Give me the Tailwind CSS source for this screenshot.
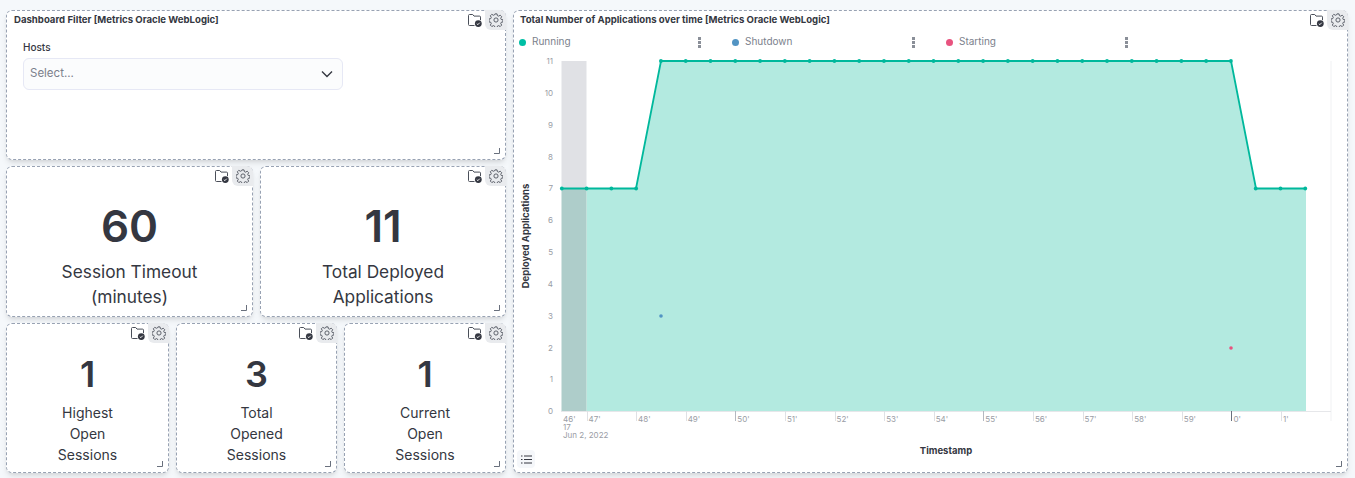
<!DOCTYPE HTML>
<html lang="en">
<head>
    <title>Metrics Oracle WebLogic</title>
    <meta http-equiv="Content-Type" content="text/html; charset=UTF-8" />
    <script src="https://cdn.jsdelivr.net/npm/@tailwindcss/browser@4"></script>
</head>
<body class="bg-[#f5f8fb] font-['Inter',sans-serif] text-[#343741] overflow-hidden">
<svg class="hidden">
    <symbol id="folder" viewBox="0 0 14 13">
        <path d="M6.500 11.500H1.500a1 1 0 0 1-1-1V1.500a1 1 0 0 1 1-1h3.200l1.300 1.600h5.500a1 1 0 0 1 1 1v3" fill="none" stroke="#4a4f59" stroke-width="1"/>
        <circle cx="10.300" cy="9.600" r="3.400" fill="#343741"/>
        <path d="M8.800 9.700l1.100 1 1.800-2" fill="none" stroke="#fff" stroke-width="0.9"/>
    </symbol>
    <symbol id="gear" viewBox="0 0 16 16">
        <path d="M6.800 1h2.400l.4 2 1.400.6 1.800-1.100 1.700 1.700-1.100 1.800.6 1.400 2 .4v2.400l-2 .4-.6 1.400 1.100 1.800-1.700 1.700-1.800-1.100-1.400.6-.4 2H6.800l-.4-2-1.400-.6-1.800 1.100-1.700-1.700 1.100-1.800-.6-1.400-2-.4V6.800l2-.4.6-1.400-1.100-1.800 1.700-1.700 1.800 1.100 1.400-.6z" fill="none" stroke="#4a4f59" stroke-width="1" stroke-linejoin="round"/>
        <circle cx="8" cy="8" r="2.400" fill="none" stroke="#4a4f59" stroke-width="1"/>
    </symbol>
    <symbol id="resize" viewBox="0 0 6 6">
        <path d="M5.500 0v5.500H0" fill="none" stroke="#69707d" stroke-width="1"/>
    </symbol>
</svg>

<div class="flex gap-[7px] pl-[6px] pt-[10px] h-[478px]">
    <!-- left column -->
    <div class="w-[500px] flex flex-col gap-[6px]">
        <div class="relative h-[150px] bg-white rounded-md border border-dashed border-[#98a2b3] shadow-md">
            <div class="absolute -right-px -top-px flex items-start">
                <svg class="w-[14px] h-[13px] mt-[4px] mr-[3px]"><use href="#folder"/></svg>
                <div class="w-[21px] h-[20px] bg-[#e9ebee] rounded-bl-md rounded-tr-md flex items-center justify-center"><svg class="w-[14px] h-[14px]"><use href="#gear"/></svg></div>
            </div>
            <h2 class="pl-[7px] pt-[2px] text-[9.6px] leading-[14px] font-bold">Dashboard Filter [Metrics Oracle WebLogic]</h2>
            <div class="pl-[16px] pt-[13px]">
                <label class="block text-[10px] leading-[14px] font-medium">Hosts</label>
                <div class="mt-[4px] w-[320px] h-[32px] bg-[#fbfcfd] border border-[#e6e8f5] rounded-md flex items-center justify-between pl-[6px] pr-[9px]">
                    <span class="text-[11.5px] text-[#7b818c]">Select...</span>
                    <svg class="w-[12px] h-[8px]" viewBox="0 0 12 8"><path d="M1 1.500l5 5 5-5" fill="none" stroke="#343741" stroke-width="1.400"/></svg>
                </div>
            </div>
            <svg class="absolute right-[5px] bottom-[5px] w-[6px] h-[6px]"><use href="#resize"/></svg>
        </div>

        <div class="flex gap-[7px] h-[151px]">
            <div class="relative w-[247px] bg-white rounded-md border border-dashed border-[#98a2b3] shadow-md flex flex-col items-center text-center">
                <div class="absolute -right-px -top-px flex items-start">
                    <svg class="w-[14px] h-[13px] mt-[4px] mr-[3px]"><use href="#folder"/></svg>
                    <div class="w-[21px] h-[20px] bg-[#e9ebee] rounded-bl-md rounded-tr-md flex items-center justify-center"><svg class="w-[14px] h-[14px]"><use href="#gear"/></svg></div>
                </div>
                <div class="mt-[29px] text-[44px] leading-[60px] font-semibold">60</div>
                <div class="mt-[3px] text-[17.3px] leading-[25px]">Session Timeout<br>(minutes)</div>
                <svg class="absolute right-[5px] bottom-[5px] w-[6px] h-[6px]"><use href="#resize"/></svg>
            </div>
            <div class="relative w-[246px] bg-white rounded-md border border-dashed border-[#98a2b3] shadow-md flex flex-col items-center text-center">
                <div class="absolute -right-px -top-px flex items-start">
                    <svg class="w-[14px] h-[13px] mt-[4px] mr-[3px]"><use href="#folder"/></svg>
                    <div class="w-[21px] h-[20px] bg-[#e9ebee] rounded-bl-md rounded-tr-md flex items-center justify-center"><svg class="w-[14px] h-[14px]"><use href="#gear"/></svg></div>
                </div>
                <div class="mt-[29px] text-[44px] leading-[60px] font-semibold">11</div>
                <div class="mt-[3px] text-[17.3px] leading-[25px]">Total Deployed<br>Applications</div>
                <svg class="absolute right-[5px] bottom-[5px] w-[6px] h-[6px]"><use href="#resize"/></svg>
            </div>
        </div>

        <div class="flex gap-[7px] h-[150px]">
            <div class="relative w-[163px] bg-white rounded-md border border-dashed border-[#98a2b3] shadow-md flex flex-col items-center text-center">
                <div class="absolute -right-px -top-px flex items-start">
                    <svg class="w-[14px] h-[13px] mt-[4px] mr-[3px]"><use href="#folder"/></svg>
                    <div class="w-[21px] h-[20px] bg-[#e9ebee] rounded-bl-md rounded-tr-md flex items-center justify-center"><svg class="w-[14px] h-[14px]"><use href="#gear"/></svg></div>
                </div>
                <div class="mt-[26px] text-[36px] leading-[48px] font-semibold">1</div>
                <div class="mt-[4px] text-[14px] leading-[21px]">Highest<br>Open<br>Sessions</div>
                <svg class="absolute right-[5px] bottom-[5px] w-[6px] h-[6px]"><use href="#resize"/></svg>
            </div>
            <div class="relative w-[161px] bg-white rounded-md border border-dashed border-[#98a2b3] shadow-md flex flex-col items-center text-center">
                <div class="absolute -right-px -top-px flex items-start">
                    <svg class="w-[14px] h-[13px] mt-[4px] mr-[3px]"><use href="#folder"/></svg>
                    <div class="w-[21px] h-[20px] bg-[#e9ebee] rounded-bl-md rounded-tr-md flex items-center justify-center"><svg class="w-[14px] h-[14px]"><use href="#gear"/></svg></div>
                </div>
                <div class="mt-[26px] text-[36px] leading-[48px] font-semibold">3</div>
                <div class="mt-[4px] text-[14px] leading-[21px]">Total<br>Opened<br>Sessions</div>
                <svg class="absolute right-[5px] bottom-[5px] w-[6px] h-[6px]"><use href="#resize"/></svg>
            </div>
            <div class="relative w-[162px] bg-white rounded-md border border-dashed border-[#98a2b3] shadow-md flex flex-col items-center text-center">
                <div class="absolute -right-px -top-px flex items-start">
                    <svg class="w-[14px] h-[13px] mt-[4px] mr-[3px]"><use href="#folder"/></svg>
                    <div class="w-[21px] h-[20px] bg-[#e9ebee] rounded-bl-md rounded-tr-md flex items-center justify-center"><svg class="w-[14px] h-[14px]"><use href="#gear"/></svg></div>
                </div>
                <div class="mt-[26px] text-[36px] leading-[48px] font-semibold">1</div>
                <div class="mt-[4px] text-[14px] leading-[21px]">Current<br>Open<br>Sessions</div>
                <svg class="absolute right-[5px] bottom-[5px] w-[6px] h-[6px]"><use href="#resize"/></svg>
            </div>
        </div>
    </div>

    <!-- chart panel -->
    <div class="relative w-[835px] h-[463px] bg-white rounded-md border border-dashed border-[#98a2b3] shadow-md">
        <div class="absolute -right-px -top-px flex items-start">
            <svg class="w-[14px] h-[13px] mt-[4px] mr-[3px]"><use href="#folder"/></svg>
            <div class="w-[21px] h-[20px] bg-[#e9ebee] rounded-bl-md rounded-tr-md flex items-center justify-center"><svg class="w-[14px] h-[14px]"><use href="#gear"/></svg></div>
        </div>
        <h2 class="pl-[6px] pt-[2px] text-[9.6px] leading-[14px] font-bold">Total Number of Applications over time [Metrics Oracle WebLogic]</h2>
        <div class="flex pl-[5px] pt-[7px] h-[24px] text-[10px] text-[#7b818c]">
            <div class="w-[213px] flex items-start">
                <span class="w-[7px] h-[7px] mt-[5px] rounded-full bg-[#00bfa5]"></span>
                <span class="ml-[6px] leading-[14px] flex-1">Running</span>
                <span class="mr-[31px] mt-[3px] flex flex-col gap-[1px]"><i class="block w-[3px] h-[3px] bg-[#8a8f98]"></i><i class="block w-[3px] h-[3px] bg-[#8a8f98]"></i><i class="block w-[3px] h-[3px] bg-[#8a8f98]"></i></span>
            </div>
            <div class="w-[214px] flex items-start">
                <span class="w-[7px] h-[7px] mt-[5px] rounded-full bg-[#5294c3]"></span>
                <span class="ml-[6px] leading-[14px] flex-1">Shutdown</span>
                <span class="mr-[31px] mt-[3px] flex flex-col gap-[1px]"><i class="block w-[3px] h-[3px] bg-[#8a8f98]"></i><i class="block w-[3px] h-[3px] bg-[#8a8f98]"></i><i class="block w-[3px] h-[3px] bg-[#8a8f98]"></i></span>
            </div>
            <div class="w-[213px] flex items-start">
                <span class="w-[7px] h-[7px] mt-[5px] rounded-full bg-[#e8537f]"></span>
                <span class="ml-[6px] leading-[14px] flex-1">Starting</span>
                <span class="mr-[31px] mt-[3px] flex flex-col gap-[1px]"><i class="block w-[3px] h-[3px] bg-[#8a8f98]"></i><i class="block w-[3px] h-[3px] bg-[#8a8f98]"></i><i class="block w-[3px] h-[3px] bg-[#8a8f98]"></i></span>
            </div>
        </div>
        <svg id="chart" class="block w-[833px] h-[421px]" viewBox="514 51 833 421" font-family="Inter, sans-serif">
            <rect x="561.500" y="61" width="25" height="127.500" fill="#e0e1e5"/>
            <path d="M586.500 188.500H636L661 61H1231L1256 188.500H1306V411H586.500Z" fill="#b3eae0"/>
            <rect x="561.500" y="188.500" width="25" height="222.500" fill="#aecdca"/>
            <path d="M1331 61V421" stroke="#f0f1f3" fill="none"/>
            <path d="M561 411.500H1331" stroke="#e6e7ea" fill="none"/>
            <path d="M561.500 188.500H636L661 61H1231L1256 188.500H1306" stroke="#00b89c" stroke-width="1.800" fill="none"/>
            <g id="dots" fill="#00b89c"></g>
            <g id="ticks" font-size="8" fill="#9a9da5"></g>
            <circle cx="661" cy="316" r="1.800" fill="#5294c3"/>
            <circle cx="1231" cy="348" r="1.800" fill="#e8537f"/>
            <g font-size="8" fill="#9a9da5" text-anchor="end">
                <text x="553" y="64">11</text><text x="553" y="96">10</text><text x="553" y="128">9</text><text x="553" y="160">8</text>
                <text x="553" y="191">7</text><text x="553" y="223">6</text><text x="553" y="255">5</text><text x="553" y="287">4</text>
                <text x="553" y="319">3</text><text x="553" y="351">2</text><text x="553" y="382">1</text><text x="553" y="414">0</text>
            </g>
            <g font-size="8" fill="#9a9da5">
                <text x="563" y="422">46'</text><text x="563" y="430">17</text><text x="563" y="438">Jun 2, 2022</text>
            </g>
            <text x="946" y="454" font-size="9.500" font-weight="700" fill="#343741" text-anchor="middle">Timestamp</text>
            <text transform="translate(529 236) rotate(-90)" font-size="9.500" font-weight="700" fill="#343741" text-anchor="middle">Deployed Applications</text>
        </svg>
        <div class="absolute left-[3px] bottom-[4px] w-[18px] h-[18px] bg-[#f5f7fa] rounded flex items-center justify-center">
            <svg class="w-[11px] h-[9px]" viewBox="0 0 11 9"><path d="M3 1h8M3 4.500h8M3 8h8" stroke="#343741" fill="none"/><path d="M0 1h1.500M0 4.500h1.500M0 8h1.500" stroke="#343741" fill="none"/></svg>
        </div>
        <svg class="absolute right-[5px] bottom-[5px] w-[6px] h-[6px]"><use href="#resize"/></svg>
    </div>
</div>

<script>
    document.addEventListener("DOMContentLoaded", function() {
        const ns = 'http://www.w3.org/2000/svg';
        const step = (1231 - 661) / 23;
        const values = [7, 7, 7, 7];
        for (let i = 0; i < 24; i++) values.push(11);
        values.push(7, 7, 7);
        values.forEach((v, i) => {
            const c = document.createElementNS(ns, 'circle');
            c.setAttribute('cx', 561.8 + i * step);
            c.setAttribute('cy', v === 11 ? 61 : 188.5);
            c.setAttribute('r', 1.9);
            document.getElementById('dots').appendChild(c);
        });
        const labels = ["47'", "48'", "49'", "50'", "51'", "52'", "53'", "54'", "55'", "56'", "57'", "58'", "59'", "0'", "1'"];
        labels.forEach((label, i) => {
            const x = 586.5 + i * (1281 - 586.5) / 14;
            const major = label === "50'" || label === "55'" || label === "0'";
            const l = document.createElementNS(ns, 'path');
            l.setAttribute('d', `M${Math.round(x) + 0.5} 411V421`);
            l.setAttribute('stroke', label === "0'" ? '#69707d' : major ? '#b4b8c0' : '#dfe1e5');
            l.setAttribute('fill', 'none');
            const t = document.createElementNS(ns, 'text');
            t.setAttribute('x', x + 2);
            t.setAttribute('y', 422);
            t.textContent = label;
            const g = document.getElementById('ticks');
            g.appendChild(l);
            g.appendChild(t);
        });
    });
</script>
</body>
</html>
